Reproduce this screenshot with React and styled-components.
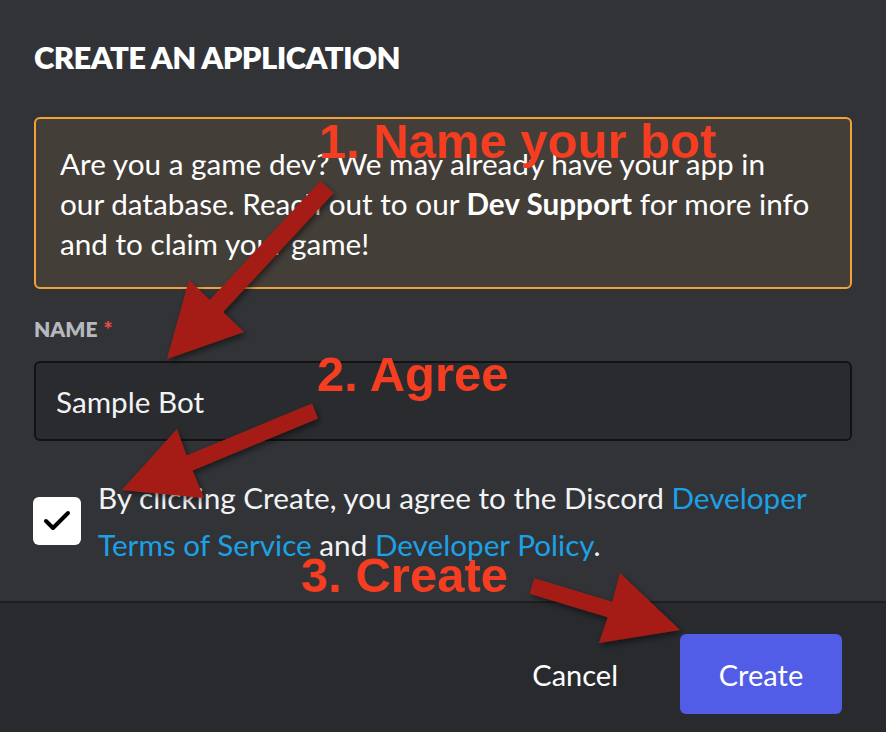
import React from 'react'
import styled, { createGlobalStyle } from 'styled-components'

const GlobalStyle = createGlobalStyle`
  body {
    margin: 0;
    background: #323337;
  }
`

const Page = styled.div`
  position: relative;
  width: 886px;
  height: 732px;
  overflow: hidden;
  background: #323337;
  font-family: Lato, "Open Sans", sans-serif;
  color: #f2f3f5;
`

const Body = styled.div`
  padding: 37px 34px 0;
`

const Title = styled.h1`
  margin: 0;
  font-size: 31px;
  line-height: 40px;
  font-weight: 800;
  letter-spacing: -0.6px;
  text-transform: uppercase;
  color: #ffffff;
`

const Notice = styled.div`
  margin-top: 40px;
  padding: 25px 24px 23px;
  border: 2px solid #f3a23a;
  border-radius: 6px;
  background: #433e38;
  font-size: 29.7px;
  line-height: 40px;
  color: #ffffff;
  white-space: nowrap;

  strong {
    font-weight: 700;
  }
`

const Label = styled.div`
  margin-top: 28px;
  font-size: 21px;
  line-height: 24px;
  font-weight: 800;
  text-transform: uppercase;
  color: #b5b9bf;

  span {
    margin-left: 6px;
    color: #f04747;
  }
`

const Input = styled.input`
  display: block;
  box-sizing: border-box;
  width: 100%;
  height: 80px;
  margin-top: 20px;
  padding: 0 20px;
  border: 2px solid #111214;
  border-radius: 6px;
  background: #2a2b2f;
  font-family: inherit;
  font-size: 29.7px;
  color: #f2f3f5;
  outline: none;
`

const CheckRow = styled.label`
  display: grid;
  grid-template-columns: 48px 1fr;
  column-gap: 17px;
  align-items: center;
  margin: 33px 0 33px -1px;
`

const Checkbox = styled.span`
  display: flex;
  align-items: center;
  justify-content: center;
  width: 48px;
  height: 48px;
  border-radius: 6px;
  background: #ffffff;
`

const Terms = styled.div`
  font-size: 29.7px;
  line-height: 47px;
  color: #f2f3f5;
`

const Link = styled.a`
  color: #1ba1e6;
  text-decoration: none;
`

const Footer = styled.div`
  display: flex;
  justify-content: flex-end;
  align-items: center;
  gap: 32px;
  padding: 31px 44px 19px;
  border-top: 2px solid #1d1e21;
  background: #292a2e;
`

const Button = styled.button`
  height: 80px;
  padding: ${p => (p.$primary ? '0' : '0 30px')};
  width: ${p => (p.$primary ? '162px' : 'auto')};
  border: none;
  border-radius: 6px;
  background: ${p => (p.$primary ? '#515de7' : 'transparent')};
  font-family: inherit;
  font-size: 29px;
  color: #ffffff;
  cursor: pointer;
`

const Overlay = styled.svg`
  position: absolute;
  left: 0;
  top: 0;
  pointer-events: none;
`

const Annotation = styled.div`
  position: absolute;
  left: ${p => p.$x}px;
  top: ${p => p.$y}px;
  font-family: "Liberation Sans", Arial, sans-serif;
  font-weight: 700;
  font-size: 49px;
  line-height: 56px;
  color: #f53d21;
  white-space: nowrap;
`

const arrows = [
  '320.4,180.9 209.9,299.9 189,280 167,359 244,332 223.1,312.1 333.6,193.1',
  '312,403.6 186.5,455.6 177,429 122,490 204,498 192.5,470.4 318,418.4',
  '534.3,578.3 612.3,601.8 620,573 680,630 599,643 607.7,617.2 529.7,593.7',
]

const App = () => (
  <Page>
    <GlobalStyle />
    <Body>
      <Title>Create an application</Title>
      <Notice>
        Are you a game dev? We may already have your app in
        <br />
        our database. Reach out to our <strong>Dev Support</strong> for more info
        <br />
        and to claim your game!
      </Notice>
      <Label>
        Name<span>*</span>
      </Label>
      <Input defaultValue="Sample Bot" />
      <CheckRow>
        <Checkbox>
          <svg width="28" height="22" viewBox="0 0 28 22">
            <path d="M3 11 L10 18 L25 3" fill="none" stroke="#000" strokeWidth="4" strokeLinecap="round" strokeLinejoin="round" />
          </svg>
        </Checkbox>
        <Terms>
          By clicking Create, you agree to the Discord <Link>Developer Terms of Service</Link> and{' '}
          <Link>Developer Policy</Link>.
        </Terms>
      </CheckRow>
    </Body>
    <Footer>
      <Button>Cancel</Button>
      <Button $primary>Create</Button>
    </Footer>

    <Overlay width="886" height="732" viewBox="0 0 886 732">
      <defs>
        <filter id="shadow" x="-20%" y="-20%" width="140%" height="140%">
          <feDropShadow dx="2" dy="3" stdDeviation="3" floodColor="#000" floodOpacity="0.5" />
        </filter>
      </defs>
      {arrows.map(points => (
        <polygon key={points} points={points} fill="#a51f13" filter="url(#shadow)" />
      ))}
    </Overlay>
    <Annotation $x={319} $y={113}>1. Name your bot</Annotation>
    <Annotation $x={317} $y={346}>2. Agree</Annotation>
    <Annotation $x={301} $y={547}>3. Create</Annotation>
  </Page>
)

export default App
